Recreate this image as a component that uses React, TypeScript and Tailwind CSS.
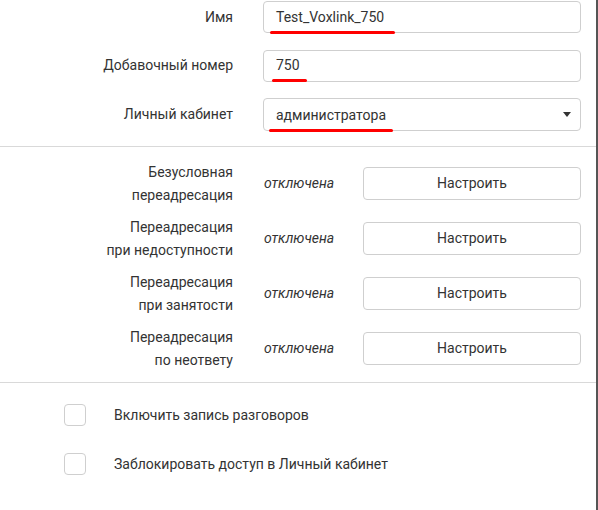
import React from "react";

const font = { fontFamily: "Roboto, 'Noto Sans', sans-serif" };

function FieldRow({
  label,
  children,
}: {
  label: string;
  children: React.ReactNode;
}) {
  return (
    <div className="flex items-center">
      <div className="w-[233px] text-right text-[14px] text-[#333]">{label}</div>
      <div className="ml-[30px] w-[318px] relative">{children}</div>
    </div>
  );
}

function ForwardRow({ l1, l2 }: { l1: string; l2: string }) {
  return (
    <div className="flex items-center h-[33px]">
      <div className="w-[233px] text-right text-[14px] leading-[23px] text-[#333]">
        <div>{l1}</div>
        <div>{l2}</div>
      </div>
      <div className="ml-[31px] w-[99px] italic text-[14px] text-[#333]">отключена</div>
      <button className="w-[218px] h-[33px] border border-[#cfcfcf] rounded-[4px] bg-white text-[14px] text-[#333]">
        Настроить
      </button>
    </div>
  );
}

export default function App() {
  return (
    <div className="w-[598px] h-[510px] bg-white" style={font}>
      <div className="w-[598px] h-[510px] border-r-2 border-[#555]">
        <div className="flex flex-col gap-[16.5px] pt-[1px] pb-[15px] border-b border-[#d9d9d9]">
          <FieldRow label="Имя">
            <div className="h-[32px] border border-[#cfcfcf] rounded-[4px] flex items-center px-[12px] text-[14px] text-[#333]">
              Test_Voxlink_750
            </div>
            <div className="absolute left-[7px] top-[30px] w-[125px] h-[3px] rounded-full bg-[#f00]" />
          </FieldRow>
          <FieldRow label="Добавочный номер">
            <div className="h-[32px] border border-[#cfcfcf] rounded-[4px] flex items-center px-[12px] text-[14px] text-[#333]">
              750
            </div>
            <div className="absolute left-[9px] top-[29.5px] w-[35px] h-[3px] rounded-full bg-[#f00]" />
          </FieldRow>
          <FieldRow label="Личный кабинет">
            <div className="h-[33px] border border-[#cfcfcf] rounded-[4px] flex items-center justify-between pl-[12px] pr-[9px] text-[14px] text-[#333]">
              <span className="pt-[1px]">администратора</span>
              <svg width="8" height="5" viewBox="0 0 8 5">
                <path d="M0 0 L8 0 L4 5 Z" fill="#333" />
              </svg>
            </div>
            <div className="absolute left-[6px] top-[31px] w-[124px] h-[3px] rounded-full bg-[#f00]" />
          </FieldRow>
        </div>
        <div className="flex flex-col gap-[22px] pt-[20px] pb-[17px] border-b border-[#d9d9d9]">
          <ForwardRow l1="Безусловная" l2="переадресация" />
          <ForwardRow l1="Переадресация" l2="при недоступности" />
          <ForwardRow l1="Переадресация" l2="при занятости" />
          <ForwardRow l1="Переадресация" l2="по неответу" />
        </div>
        <div className="flex flex-col gap-[27px] pt-[21px] pl-[64px]">
          <div className="flex items-center">
            <div className="w-[22px] h-[22px] border border-[#cfcfcf] rounded-[4px]" />
            <span className="ml-[28px] text-[14px] text-[#333]">Включить запись разговоров</span>
          </div>
          <div className="flex items-center">
            <div className="w-[22px] h-[22px] border border-[#cfcfcf] rounded-[4px]" />
            <span className="ml-[28px] text-[14px] text-[#333]">Заблокировать доступ в Личный кабинет</span>
          </div>
        </div>
      </div>
    </div>
  );
}
